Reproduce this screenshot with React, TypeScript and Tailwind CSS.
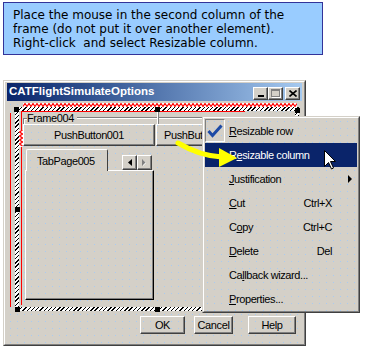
import React from 'react'

const dots =
  'bg-[#d4d0c8] bg-[radial-gradient(circle,#a9cbf2_0.6px,transparent_1px)] bg-[size:7px_7px]'
const raised =
  'border border-t-white border-l-white border-r-[#404040] border-b-[#404040] shadow-[inset_-1px_-1px_0_#808080]'
const hatch = 'bg-[repeating-linear-gradient(-45deg,#000_0px,#000_1px,#fff_1px,#fff_3px)]'

function Zigzag({ len, vertical }: { len: number; vertical?: boolean }) {
  const pts: string[] = []
  for (let i = 0; i <= len; i += 2) {
    const o = (i / 2) % 2 === 0 ? 3.5 : 0.5
    pts.push(vertical ? `${o},${i}` : `${i},${o}`)
  }
  return (
    <svg width={vertical ? 4 : len} height={vertical ? len : 4} className="block bg-white">
      <polyline points={pts.join(' ')} fill="none" stroke="#ff0000" strokeWidth="1.2" />
    </svg>
  )
}

function Handle({ className }: { className: string }) {
  return <div className={`absolute h-[5px] w-[5px] bg-black ${className}`} />
}

function TitleButtons() {
  return (
    <div className="ml-auto mt-[2px] flex pr-[2px]">
      <div className={`flex h-[13px] w-[15px] items-end justify-center pb-[2px] bg-[#d4d0c8] ${raised}`}>
        <div className="h-[2px] w-[6px] bg-black" />
      </div>
      <div className={`flex h-[13px] w-[15px] items-center justify-center bg-[#d4d0c8] ${raised}`}>
        <div className="h-[8px] w-[9px] border border-t-2 border-[#808080] shadow-[1px_1px_0_#fff]" />
      </div>
      <div className={`ml-[2px] flex h-[13px] w-[15px] items-center justify-center bg-[#d4d0c8] ${raised}`}>
        <svg width="8" height="7" viewBox="0 0 8 7">
          <path d="M0.5 0.5 L7.5 6.5 M7.5 0.5 L0.5 6.5" stroke="#000" strokeWidth="1.6" />
        </svg>
      </div>
    </div>
  )
}

function PushButton({ label, w, h, className = '' }: { label: string; w: string; h: string; className?: string }) {
  return (
    <div className={`flex items-center justify-center overflow-hidden whitespace-nowrap ${raised} ${w} ${h} ${className}`}>
      {label}
    </div>
  )
}

function Client() {
  return (
    <div className={`relative flex flex-1 flex-col pl-[16px] pr-[6px] pt-[11px] pb-[10px] ${dots}`}>
      {/* frame header */}
      <div className="flex h-[12px] w-[277px] items-center">
        <div className="h-[6px] w-[4px] self-end border-l border-t border-[#808080] shadow-[inset_1px_1px_0_#fff]" />
        <span className="leading-none">Frame004</span>
        <div className="ml-[3px] h-[2px] flex-1 border-t border-[#808080] bg-white" />
      </div>
      <div className="flex">
        <PushButton label="PushButton001" w="w-[132px]" h="h-[22px]" />
        <PushButton label="PushButton002" w="w-[86px]" h="h-[22px]" className="ml-[1px]" />
      </div>
      <div className="mt-[3px] flex h-[21px] items-end">
        <div className={`relative z-10 ml-[3px] flex h-[22px] w-[82px] translate-y-[1px] items-center rounded-t-[2px] border-l border-t border-r border-l-white border-t-white border-r-[#404040] pl-[10px] pt-[1px] ${dots}`}>
          TabPage005
        </div>
        <div className="ml-[14px] flex">
          <div className={`flex h-[15px] w-[15px] items-center justify-center bg-[#d4d0c8] ${raised}`}>
            <svg width="4" height="7" viewBox="0 0 4 7">
              <path d="M4 0 L0 3.5 L4 7 Z" fill="#000" />
            </svg>
          </div>
          <div className={`flex h-[15px] w-[15px] items-center justify-center bg-[#d4d0c8] ${raised}`}>
            <svg width="5" height="8" viewBox="0 0 5 8">
              <path d="M1 1 L4 4 L1 7 Z" fill="#fff" />
              <path d="M0 0 L3.5 3.5 L0 7 Z" fill="#808080" />
            </svg>
          </div>
        </div>
      </div>
      <div className="ml-[2px] h-[130px] w-[129px] border-l border-t border-r border-b border-l-white border-t-white border-r-[#000] border-b-[#000] shadow-[inset_-1px_-1px_0_#808080]" />
      <div className="mt-auto flex justify-end">
        <PushButton label="OK" w="w-[45px]" h="h-[18px]" />
        <PushButton label="Cancel" w="w-[39px]" h="h-[18px]" className="ml-[9px]" />
        <PushButton label="Help" w="w-[48px]" h="h-[18px]" className="ml-[15px]" />
      </div>

      {/* selection overlay */}
      <div className="absolute left-[16px] top-[2px]">
        <Zigzag len={274} />
      </div>
      <div className={`absolute left-[8px] top-[6px] h-[4px] w-[284px] ${hatch}`} />
      <div className={`absolute left-[8px] top-[6px] h-[204px] w-[4px] ${hatch}`} />
      <div className={`absolute left-[8px] top-[206px] h-[4px] w-[284px] ${hatch}`} />
      <div className={`absolute left-[288px] top-[6px] h-[204px] w-[4px] ${hatch}`} />
      <div className="absolute left-[3px] top-[12px] h-[194px] w-[1px] bg-[#ff0000]" />
      <div className="absolute left-[14px] top-[10px] h-[194px] w-[1px] bg-[#ff0000]" />
      <div className="absolute left-[14px] top-[10px] h-[1px] w-[224px] bg-[#ff0000]" />
      <div className="absolute left-[12px] top-[29px]">
        <Zigzag len={17} vertical />
      </div>
      <div className="absolute left-[150px] top-[10px] h-[13px] w-[2px] border-l border-white bg-[#808080]" />
      <Handle className="left-[7px] top-[6px]" />
      <Handle className="left-[148px] top-[6px]" />
      <Handle className="left-[288px] top-[7px]" />
      <Handle className="left-[8px] top-[106px]" />
      <Handle className="left-[8px] top-[206px]" />
      <Handle className="left-[148px] top-[206px]" />
    </div>
  )
}

type Item = {
  label: React.ReactNode
  check?: boolean
  active?: boolean
  sub?: boolean
  keys?: string
}

const items: Item[] = [
  { label: <><u>R</u>esizable row</>, check: true },
  { label: <>R<u>e</u>sizable column</>, active: true },
  { label: <><u>J</u>ustification</>, sub: true },
  { label: <><u>C</u>ut</>, keys: 'Ctrl+X' },
  { label: <>C<u>o</u>py</>, keys: 'Ctrl+C' },
  { label: <><u>D</u>elete</>, keys: 'Del' },
  { label: <>Ca<u>l</u>lback wizard...</> },
  { label: <><u>P</u>roperties...</> },
]

function ContextMenu() {
  return (
    <div className="absolute left-[202px] top-[116px] h-[197px] w-[158px] border border-t-[#d4d0c8] border-l-[#d4d0c8] border-r-[#404040] border-b-[#404040]">
      <div className={`h-full w-full border border-t-white border-l-white border-r-[#808080] border-b-[#808080] px-[1px] pt-[1px] ${dots}`}>
        {items.map((it, i) => (
          <div
            key={i}
            className={`relative flex h-[24px] items-center pl-[24px] pr-[5px] ${it.active ? 'bg-[#0a246a] text-white' : ''}`}
          >
            {it.check && (
              <div className="absolute left-0 top-0 flex h-[23px] w-[20px] items-center justify-center border border-t-[#808080] border-l-[#808080] border-r-white border-b-white">
                <svg width="16" height="14" viewBox="0 0 16 14">
                  <path d="M1.5 7 L5.5 11.5 L14.5 1.5" fill="none" stroke="#1d4aa5" strokeWidth="3" />
                </svg>
              </div>
            )}
            <span>{it.label}</span>
            {it.keys && <span className="ml-auto mr-[20px]">{it.keys}</span>}
            {it.sub && (
              <svg width="4" height="8" viewBox="0 0 4 8" className="ml-auto">
                <path d="M0 0 L4 4 L0 8 Z" fill="#000" />
              </svg>
            )}
          </div>
        ))}
      </div>
    </div>
  )
}

export default function App() {
  return (
    <div className="relative h-[349px] w-[366px] overflow-hidden bg-white font-['Liberation_Sans',Arial,sans-serif] text-[11px] tracking-[-0.4px] text-black">
      <div className="flex flex-col pl-[3px] pt-[2px]">
        <div className="h-[53px] w-[320px] whitespace-pre border border-[#333399] bg-[#99ccff] pl-[9px] pt-[5px] font-['DejaVu_Sans',sans-serif] text-[12px] leading-[14px] tracking-normal">
          <p>Place the mouse in the second column of the</p>
          <p>frame (do not put it over another element).</p>
          <p>Right-click  and select Resizable column.</p>
        </div>
        <div className="mt-[25px] h-[266px] w-[303px] border border-t-[#d4d0c8] border-l-[#d4d0c8] border-r-[#404040] border-b-[#404040]">
          <div className="flex h-full flex-col border border-t-white border-l-white border-r-[#808080] border-b-[#808080] bg-[#d4d0c8] px-[2px] pt-[1px]">
            <div className="flex h-[18px] shrink-0 items-center bg-linear-to-r from-[#0a246a] to-[#a6caf0] pl-[2px]">
              <span className="text-[11.5px] font-bold tracking-normal text-white">CATFlightSimulateOptions</span>
              <TitleButtons />
            </div>
            <Client />
          </div>
        </div>
      </div>
      <ContextMenu />
      <svg className="pointer-events-none absolute left-0 top-0" width="366" height="349">
        <path d="M178 143 Q200 156 222 157" fill="none" stroke="#ffff00" strokeWidth="5" strokeLinecap="round" />
        <polygon points="219,148 237,158 219,167" fill="#ffff00" />
      </svg>
      <svg className="pointer-events-none absolute left-[324px] top-[150px]" width="13" height="20" viewBox="0 0 13 20">
        <polygon points="0.5,0.5 0.5,16.5 4.5,12.5 7.5,19 9.5,18 6.5,11.5 11.5,11.5" fill="#fff" stroke="#000" strokeWidth="1" />
      </svg>
    </div>
  )
}
